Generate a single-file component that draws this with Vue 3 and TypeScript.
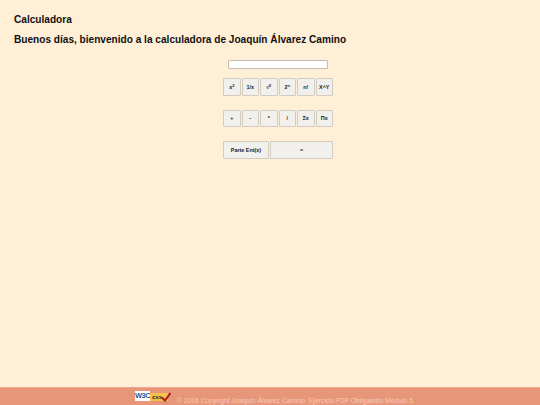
<script setup lang="ts">
const row1 = [
  { base: 'x', sup: '2' },
  { base: '1/x', sup: '' },
  { base: '√', sup: '2' },
  { base: '2', sup: 'n' },
  { base: 'n!', sup: '' },
  { base: 'X^Y', sup: '' },
]
const row2 = ['+', '-', '*', '/', 'Σx', 'Πx']
</script>

<template>
  <div class="page">
    <main class="content">
      <h1 class="title">Calculadora</h1>
      <h2 class="welcome">Buenos días, bienvenido a la calculadora de Joaquín Álvarez Camino</h2>
      <section class="calc">
        <input class="display" type="text" />
        <div class="keys row-one">
          <button v-for="k in row1" :key="k.base + k.sup" class="key">{{ k.base }}<span v-if="k.sup" class="sup">{{ k.sup }}</span></button>
        </div>
        <div class="keys row-two">
          <button v-for="k in row2" :key="k" class="key">{{ k }}</button>
        </div>
        <div class="keys row-three">
          <button class="key wide">Parte Ent(x)</button>
          <button class="key equals">=</button>
        </div>
      </section>
    </main>
    <footer class="footer">
      <div class="badges">
        <span class="w3c">W3C</span>
        <span class="css">
          <span class="css-text">css</span>
          <svg class="check" viewBox="0 0 10 10" width="10" height="10">
            <path d="M1 5.5 L4 8.5 L9.5 1" fill="none" stroke="#a81c14" stroke-width="2" />
          </svg>
        </span>
      </div>
      <span class="copy">© 2016 Copyright Joaquín Álvarez Camino&nbsp; Ejercicio P2P Obligatorio Módulo 5</span>
    </footer>
  </div>
</template>

<style>
html, body { margin: 0; padding: 0; }
</style>

<style scoped>
.page {
  width: 540px;
  height: 405px;
  background: #ffefd7;
  display: flex;
  flex-direction: column;
  font-family: "Liberation Sans", Arial, sans-serif;
  color: #111;
  overflow: hidden;
}
.content { flex: 1; padding: 14px 14px 0; }
.title { margin: 0; font-size: 10.1px; line-height: 12px; font-weight: 700; }
.welcome { margin: 7px 0 0; font-size: 10.1px; line-height: 14px; font-weight: 700; }
.calc {
  display: flex;
  flex-direction: column;
  align-items: center;
  margin: 13px 0 0 14px;
  width: 500px;
}
.display {
  box-sizing: border-box;
  width: 100px;
  height: 9px;
  padding: 0;
  background: #fff;
  border: 1px solid #c2bcb0;
  border-radius: 1px;
}
.keys { display: flex; width: 110px; justify-content: space-between; }
.row-one { margin-top: 9px; }
.row-two { margin-top: 14px; }
.row-three { margin-top: 14px; }
.key {
  box-sizing: border-box;
  width: 17.5px;
  height: 17.5px;
  padding: 0;
  background: #f2f0ec;
  border: 1px solid #d2ccc0;
  border-radius: 1px;
  font-family: inherit;
  font-size: 5.4px;
  line-height: 6px;
  font-weight: 700;
  color: #222;
  text-align: center;
}
.sup { font-size: 4px; vertical-align: 2px; line-height: 0; }
.row-three .key { height: 18px; }
.wide { width: 46px; }
.equals { width: 63px; }
.footer {
  height: 18px;
  background: #e8967a;
  border-top: 1px solid #eda98e;
  box-sizing: border-box;
  display: flex;
  align-items: flex-end;
  padding-left: 135px;
}
.badges { display: flex; align-self: flex-start; align-items: flex-start; margin-top: 3px; }
.w3c {
  width: 15px;
  height: 10px;
  background: #fff;
  font-size: 7.5px;
  line-height: 10px;
  font-weight: 700;
  color: #2a5a9e;
  letter-spacing: -0.5px;
  text-align: center;
}
.css {
  position: relative;
  width: 18px;
  height: 8px;
  background: #f5c04e;
  margin-top: 2px;
  display: flex;
  align-items: center;
}
.css-text { font-size: 6px; font-weight: 700; color: #222; margin-left: 2px; }
.check { position: absolute; right: -3px; top: -1px; }
.copy {
  margin-left: 9px;
  font-size: 6.75px;
  line-height: 9px;
  color: #f9cbb5;
  white-space: nowrap;
}
</style>
